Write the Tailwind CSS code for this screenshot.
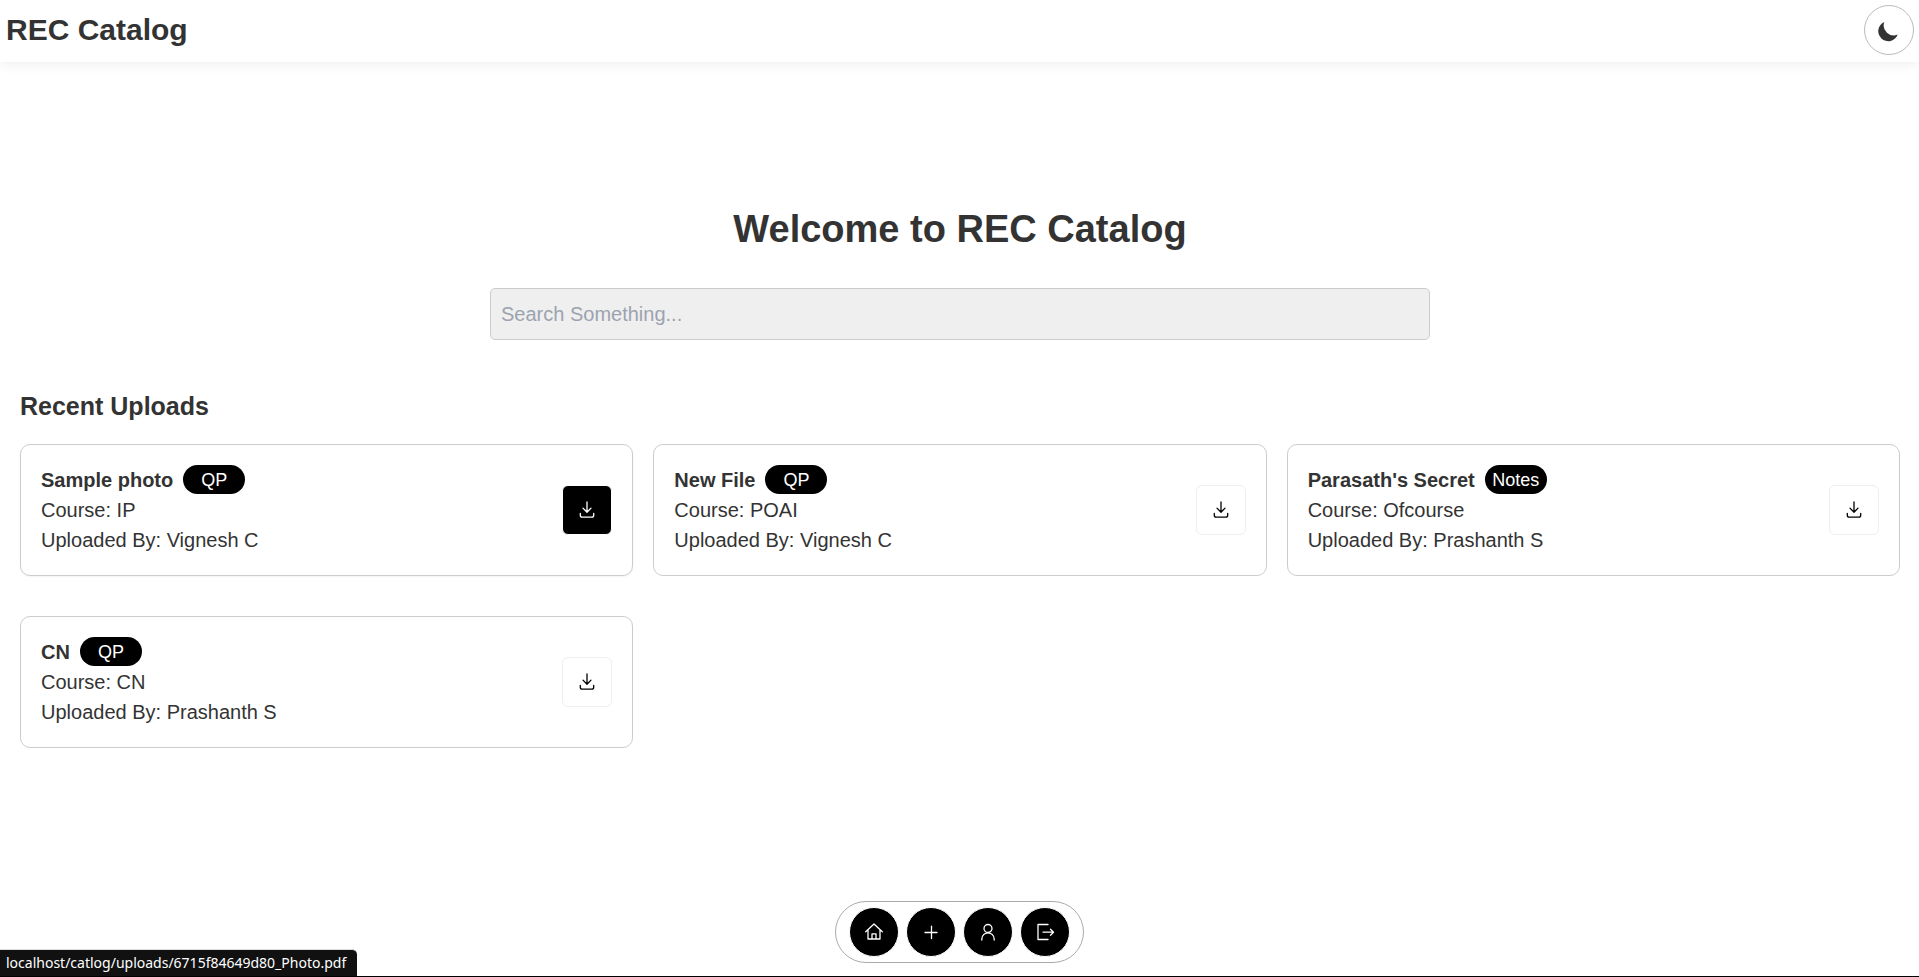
<!DOCTYPE html>
<html lang="en">
<head>
<meta charset="utf-8">
<title>REC Catalog</title>
<script src="https://cdn.jsdelivr.net/npm/@tailwindcss/browser@4"></script>
</head>
<body class="flex min-h-screen flex-col border-b border-black bg-white font-['Liberation_Sans',Arial,sans-serif] text-xl leading-[30px] text-[#333]">
<svg class="hidden" aria-hidden="true">
  <symbol id="download" viewBox="-10 -10 20 20"><path d="M0-8V2.3M-4-1.9 0 2.3 4-1.9M-6.7 3.3V5.2a2 2 0 0 0 2 2H4.7a2 2 0 0 0 2-2V3.3" fill="none" stroke="currentColor" stroke-width="1.3" stroke-linecap="round" stroke-linejoin="round"/></symbol>
</svg>

<header class="flex items-center justify-between bg-white pt-[5px] pr-[5px] pb-[7px] pl-[6px] shadow-[0_2px_12px_rgba(0,0,0,0.07)]">
  <a href="#" class="text-3xl leading-9 font-bold">REC Catalog</a>
  <button type="button" aria-label="Toggle dark mode" class="flex size-[50px] items-center justify-center rounded-full border border-[#bbb]">
    <svg class="size-6" viewBox="-12 -12 24 24" fill="currentColor"><path d="M-4.7-8A10 10 0 1 0 8.7 4.5 10 10 0 0 1-4.7-8z"/></svg>
  </button>
</header>

<main class="grow pt-[145px] pr-[19px] pl-5">
  <h1 class="text-center text-[38px] leading-[45px] font-bold">Welcome to REC Catalog</h1>
  <input type="search" aria-label="Search" placeholder="Search Something..." class="mx-auto mt-9 block h-[52px] w-full max-w-[940px] rounded-[5px] border border-[#ccc] bg-[#efefef] px-[10px] placeholder:text-[#9ca3af]">

  <h2 class="mt-[49px] text-[25px] leading-[35px] font-bold">Recent Uploads</h2>
  <section class="mt-5 grid grid-cols-3 gap-x-5 gap-y-10">
    <article class="flex items-center justify-between rounded-[10px] border border-[#ccc] p-5 shadow-xs">
      <div>
        <div class="flex gap-[10px]"><h3 class="font-bold">Sample photo</h3><span class="h-[29px] min-w-[62px] rounded-full bg-black px-[7px] text-center text-[18px] leading-[30px] text-white">QP</span></div>
        <p>Course: IP</p>
        <p>Uploaded By: Vignesh C</p>
      </div>
      <a href="#" aria-label="Download Sample photo" class="flex size-[50px] items-center justify-center rounded-md border border-white bg-black text-white"><svg class="size-5"><use href="#download"/></svg></a>
    </article>
    <article class="flex items-center justify-between rounded-[10px] border border-[#ccc] p-5">
      <div>
        <div class="flex gap-[10px]"><h3 class="font-bold">New File</h3><span class="h-[29px] min-w-[62px] rounded-full bg-black px-[7px] text-center text-[18px] leading-[30px] text-white">QP</span></div>
        <p>Course: POAI</p>
        <p>Uploaded By: Vignesh C</p>
      </div>
      <a href="#" aria-label="Download New File" class="flex size-[50px] items-center justify-center rounded-md border border-[#eee] bg-white text-black"><svg class="size-5"><use href="#download"/></svg></a>
    </article>
    <article class="flex items-center justify-between rounded-[10px] border border-[#ccc] p-5">
      <div>
        <div class="flex gap-[10px]"><h3 class="font-bold">Parasath's Secret</h3><span class="h-[29px] min-w-[62px] rounded-full bg-black px-[7px] text-center text-[18px] leading-[30px] text-white">Notes</span></div>
        <p>Course: Ofcourse</p>
        <p>Uploaded By: Prashanth S</p>
      </div>
      <a href="#" aria-label="Download Parasath's Secret" class="flex size-[50px] items-center justify-center rounded-md border border-[#eee] bg-white text-black"><svg class="size-5"><use href="#download"/></svg></a>
    </article>
    <article class="flex items-center justify-between rounded-[10px] border border-[#ccc] p-5">
      <div>
        <div class="flex gap-[10px]"><h3 class="font-bold">CN</h3><span class="h-[29px] min-w-[62px] rounded-full bg-black px-[7px] text-center text-[18px] leading-[30px] text-white">QP</span></div>
        <p>Course: CN</p>
        <p>Uploaded By: Prashanth S</p>
      </div>
      <a href="#" aria-label="Download CN" class="flex size-[50px] items-center justify-center rounded-md border border-[#eee] bg-white text-black"><svg class="size-5"><use href="#download"/></svg></a>
    </article>
  </section>
</main>

<nav aria-label="Main" class="fixed inset-x-0 bottom-[14px] mx-auto flex w-fit gap-[7px] rounded-full border border-[#aaa] bg-white px-[13px] py-[5px] text-white">
  <a href="#" aria-label="Home" class="flex size-[50px] items-center justify-center rounded-full border border-white bg-black">
    <svg class="size-5" viewBox="-10 -10 20 20" fill="none" stroke="currentColor" stroke-width="1.3" stroke-linejoin="round" stroke-linecap="round"><path d="M-8.3-.2 0-8 8.3-.2M-6-2V7H6V-2M-2 7V1.8H2V7"/></svg>
  </a>
  <a href="#" aria-label="Upload" class="flex size-[50px] items-center justify-center rounded-full border border-white bg-black">
    <svg class="size-5" viewBox="-10 -10 20 20" fill="none" stroke="currentColor" stroke-width="1.3" stroke-linecap="round"><path d="M-6 .5H6M.5-5.8V6.5"/></svg>
  </a>
  <a href="#" aria-label="Profile" class="flex size-[50px] items-center justify-center rounded-full border border-white bg-black">
    <svg class="size-5" viewBox="-10 -10 20 20" fill="none" stroke="currentColor" stroke-width="1.3" stroke-linecap="round"><circle cx="0" cy="-3.5" r="4"/><path d="M-6.2 8V7A6.2 6.2 0 0 1 6.2 7V8"/></svg>
  </a>
  <a href="#" aria-label="Log out" class="flex size-[50px] items-center justify-center rounded-full border border-white bg-black">
    <svg class="size-5" viewBox="-10 -10 20 20" fill="none" stroke="currentColor" stroke-width="1.3" stroke-linecap="round" stroke-linejoin="round"><path d="M3-7.5H-7V7.5H3M-2 .2H8.5M5.5-2.8 8.5 .2 5.5 3.2"/></svg>
  </a>
</nav>

<div role="status" class="fixed bottom-px left-0 h-[27px] rounded-tr-[5px] border-t border-[#ddd] bg-[#111] pr-[11px] pl-[6px] font-['Noto_Sans','Open_Sans',sans-serif] text-[14px] leading-[26px] text-white">localhost/catlog/uploads/6715f84649d80_Photo.pdf</div>
</body>
</html>
